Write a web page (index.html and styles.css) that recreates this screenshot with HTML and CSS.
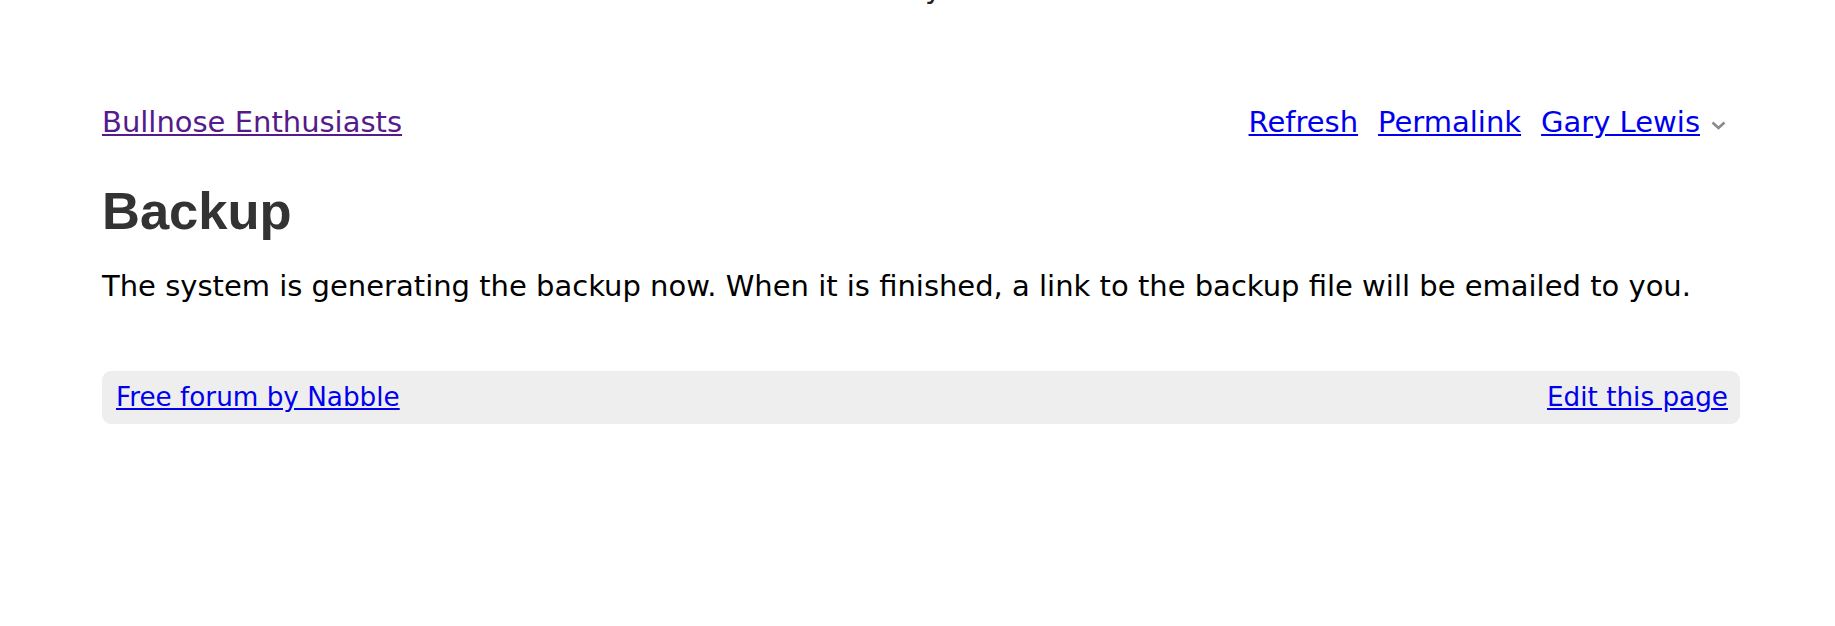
FILE: index.html
```html
<!DOCTYPE html>
<html lang="en">
<head>
    <meta charset="UTF-8">
    <meta name="viewport" content="width=device-width, initial-scale=1.0">
    <title>Backup - Bullnose Enthusiasts</title>
    <link rel="stylesheet" href="styles.css">
</head>
<body>

<!-- Cut-off line above the page -->
<div class="top-note">y</div>

<div class="page">
    <!-- Top bar -->
    <div class="topbar">
        <a class="app-link visited" href="#">Bullnose Enthusiasts</a>
        <div class="topbar-links">
            <a href="#">Refresh</a>
            <a href="#">Permalink</a>
            <span class="user">
                <a href="#">Gary Lewis</a>
                <svg class="chevron" width="15" height="9" viewBox="0 0 15 9">
                    <path d="M1.5 1.5 L7.5 7 L13.5 1.5" fill="none" stroke="#8a8a8a" stroke-width="2.6"/>
                </svg>
            </span>
        </div>
    </div>

    <h1>Backup</h1>
    <p class="message">The system is generating the backup now. When it is finished, a link to the backup file will be emailed to you.</p>

    <!-- Footer -->
    <div class="footer">
        <a href="#">Free forum by Nabble</a>
        <a href="#">Edit this page</a>
    </div>
</div>

</body>
</html>
```

FILE: styles.css
```css
/* Basic reset */
* {
    margin: 0;
    padding: 0;
    box-sizing: border-box;
}
body {
    font-family: "DejaVu Sans", Verdana, sans-serif;
    font-size: 29px;
    color: #000;
    background-color: #fff;
    overflow: hidden;
}
a {
    color: #0000ee;
}
a.visited {
    color: #551a8b;
}

/* Line cut off by the top of the window */
.top-note {
    margin-top: -29px;
    padding-left: 32px;
    text-align: center;
    color: #222;
}

/* Page container */
.page {
    padding: 0 95px 0 102px;
}

/* Top bar */
.topbar {
    display: flex;
    justify-content: space-between;
    align-items: baseline;
    margin-top: 100px;
    padding-right: 14px;
}
.topbar-links {
    display: flex;
    align-items: baseline;
    gap: 20px;
}
.user {
    display: flex;
    align-items: baseline;
    gap: 11px;
}
.chevron {
    align-self: center;
    margin-top: 6px;
}

/* Content */
h1 {
    margin-top: 40.5px;
    font-family: "Liberation Sans", Arial, sans-serif;
    font-size: 52.5px;
    font-weight: bold;
    color: #333;
}
.message {
    margin-top: 28.5px;
}

/* Footer */
.footer {
    display: flex;
    justify-content: space-between;
    margin-top: 68px;
    padding: 10.5px 12px 12px 14px;
    font-size: 26.25px;
    background-color: #eeeeee;
    border-radius: 9px;
}
```
